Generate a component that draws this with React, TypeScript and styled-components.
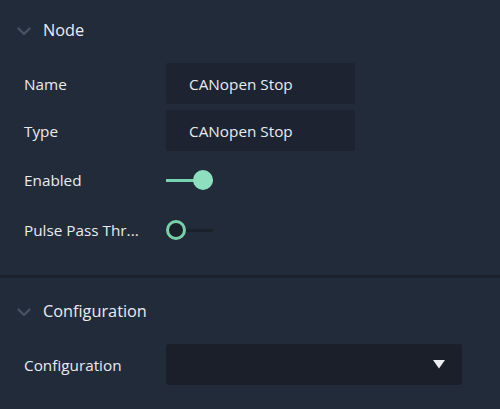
import React from "react";
import styled, { createGlobalStyle } from "styled-components";

const Global = createGlobalStyle`
  html, body { margin: 0; padding: 0; background: #222b3a; }
  body { font-family: "Open Sans", "Noto Sans", sans-serif; color: #e8ebf0; }
`;

const Panel = styled.div`
  width: 500px;
  height: 409px;
  background: #222b3a;
  overflow: hidden;
`;

const Section = styled.section<{ $last?: boolean }>`
  padding: ${(p) => (p.$last ? "3px 0 0" : "0 0 20px")};
  border-bottom: ${(p) => (p.$last ? "none" : "3px solid #1b222d")};
`;

const Header = styled.div`
  height: 60px;
  display: flex;
  align-items: center;
  padding-left: 17px;
  margin-bottom: 3px;
  gap: 12px;
  font-size: 16.3px;
  color: #e9ecf1;
`;

const Chevron = () => (
  <svg width="14" height="9" viewBox="0 0 14 9" style={{ marginTop: 3 }}>
    <path d="M1.5 1.5 L7 7 L12.5 1.5" fill="none" stroke="#485163" strokeWidth="2.4" strokeLinecap="round" strokeLinejoin="round" />
  </svg>
);

const Row = styled.div<{ $h: number; $mb?: number }>`
  height: ${(p) => p.$h}px;
  margin-bottom: ${(p) => p.$mb ?? 0}px;
  display: grid;
  grid-template-columns: 142px 1fr;
  align-items: center;
  padding-left: 24px;
`;

const Label = styled.div`
  font-size: 15.3px;
  color: #e8ebf0;
  white-space: nowrap;
`;

const TextField = styled.div`
  width: 189px;
  height: 41px;
  box-sizing: border-box;
  background: #1d2331;
  border-radius: 2px;
  display: flex;
  align-items: center;
  padding-left: 23px;
  font-size: 15.3px;
  color: #e8ebf0;
`;

const Toggle = styled.div<{ $on: boolean }>`
  position: relative;
  width: 47px;
  height: 20px;
  &::before {
    content: "";
    position: absolute;
    left: 0;
    right: 0;
    top: 8.5px;
    height: 3px;
    background: ${(p) => (p.$on ? "#78d4b0" : "#1b212b")};
  }
`;

const Knob = styled.div<{ $on: boolean }>`
  position: absolute;
  top: 0;
  left: ${(p) => (p.$on ? "27px" : "0")};
  width: 20px;
  height: 20px;
  box-sizing: border-box;
  border-radius: 50%;
  background: ${(p) => (p.$on ? "#8ddfbf" : "#1b212b")};
  border: ${(p) => (p.$on ? "none" : "3px solid #79cfa8")};
`;

const Select = styled.div`
  width: 296px;
  height: 41px;
  box-sizing: border-box;
  background: #1b1f29;
  border-radius: 3px;
  display: flex;
  align-items: center;
  justify-content: flex-end;
  padding-right: 17px;
`;

const Caret = () => (
  <svg width="12" height="9" viewBox="0 0 12 9">
    <path d="M0 0 H12 L6 8.5 Z" fill="#eceef3" />
  </svg>
);

export default function App() {
  return (
    <Panel>
      <Global />
      <Section>
        <Header>
          <Chevron />
          Node
        </Header>
        <Row $h={41} $mb={6}>
          <Label>Name</Label>
          <TextField>CANopen Stop</TextField>
        </Row>
        <Row $h={41} $mb={4}>
          <Label>Type</Label>
          <TextField>CANopen Stop</TextField>
        </Row>
        <Row $h={50}>
          <Label>Enabled</Label>
          <Toggle $on>
            <Knob $on />
          </Toggle>
        </Row>
        <Row $h={50}>
          <Label>Pulse Pass Thr...</Label>
          <Toggle $on={false}>
            <Knob $on={false} />
          </Toggle>
        </Row>
      </Section>
      <Section $last>
        <Header>
          <Chevron />
          Configuration
        </Header>
        <Row $h={41}>
          <Label>Configuration</Label>
          <Select>
            <Caret />
          </Select>
        </Row>
      </Section>
    </Panel>
  );
}
